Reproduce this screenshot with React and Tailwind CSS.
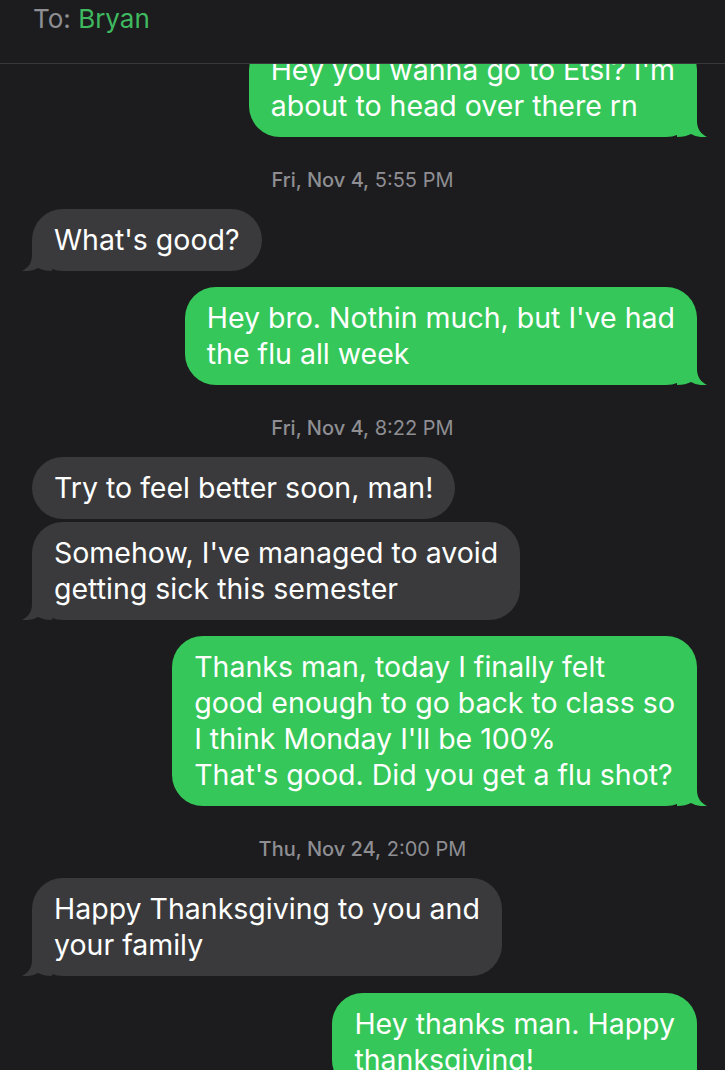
import React from 'react';

const font = { fontFamily: 'Inter, "Noto Sans", sans-serif' };

const Tail = ({ side, color }) => (
  <svg
    className={`absolute bottom-0 ${side === 'right' ? 'right-[-10px]' : 'left-[-10px] scale-x-[-1]'}`}
    width="30"
    height="30"
    viewBox="0 0 30 30"
  >
    <path
      d="M0 0 H20 V14 C20 22 24 27 30 30 C24 30.6 18.5 29.6 14 27 C10 29 6 30 0 30 Z"
      fill={color}
    />
  </svg>
);

const Bubble = ({ lines, sent, tail = true, className = '' }) => (
  <div
    className={`relative rounded-[31px] px-[22px] py-[13px] text-[28.5px] leading-[36px] text-white whitespace-nowrap ${
      sent ? 'self-end mr-[28px] bg-[#35c759]' : 'self-start ml-[32px] bg-[#3a3a3c]'
    } ${className}`}
  >
    {lines.map((l, i) => (
      <div key={i}>{l}</div>
    ))}
    {tail && <Tail side={sent ? 'right' : 'left'} color={sent ? '#35c759' : '#3a3a3c'} />}
  </div>
);

const Stamp = ({ day, time }) => (
  <div className="mt-[31px] mb-[17px] text-center text-[20px] leading-[24px] text-[#8e8e93]">
    <span className="font-medium">{day}</span> {time}
  </div>
);

export default function App() {
  return (
    <div className="h-[1070px] w-full overflow-hidden bg-[#1c1c1e]" style={font}>
      <div className="relative z-10 h-[64px] border-b border-[#38383a] bg-[#1c1c1e] pl-[33px] pt-[3px] text-[26px] leading-[32px]">
        <span className="text-[#8e8e93]">To:</span> <span className="text-[#3fb95f]">Bryan</span>
      </div>
      <div className="flex flex-col">
        <Bubble sent className="-mt-[25px]" lines={["Hey you wanna go to Etsi? I'm", 'about to head over there rn']} />
        <Stamp day="Fri, Nov 4," time="5:55 PM" />
        <Bubble lines={["What's good?"]} />
        <Bubble sent className="mt-[16px]" lines={["Hey bro. Nothin much, but I've had", 'the flu all week']} />
        <Stamp day="Fri, Nov 4," time="8:22 PM" />
        <Bubble tail={false} lines={['Try to feel better soon, man!']} />
        <Bubble className="mt-[3px]" lines={["Somehow, I've managed to avoid", 'getting sick this semester']} />
        <Bubble
          sent
          className="mt-[16px]"
          lines={[
            'Thanks man, today I finally felt',
            'good enough to go back to class so',
            "I think Monday I'll be 100%",
            "That's good. Did you get a flu shot?",
          ]}
        />
        <Stamp day="Thu, Nov 24," time="2:00 PM" />
        <Bubble lines={['Happy Thanksgiving to you and', 'your family']} />
        <Bubble sent className="mt-[17px]" lines={['Hey thanks man. Happy', 'thanksgiving!']} />
      </div>
    </div>
  );
}
